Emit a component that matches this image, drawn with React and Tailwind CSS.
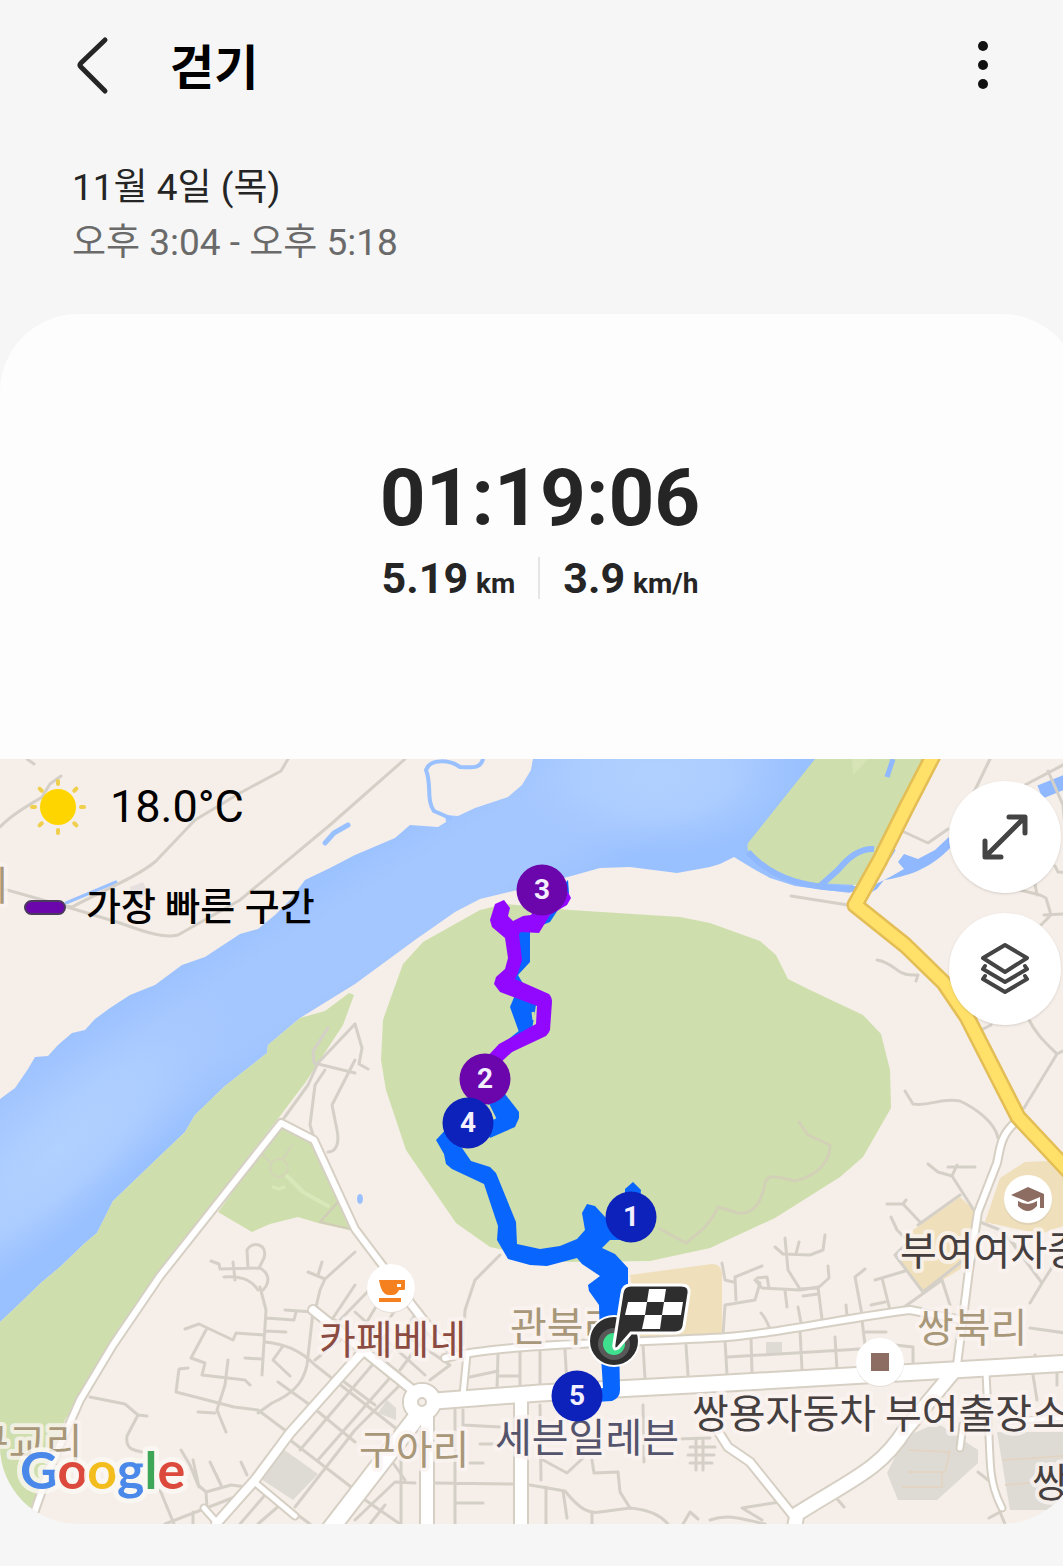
import React from 'react';

const LABEL_FONT = '"Noto Sans CJK KR", sans-serif';

const THIN_ROADS = [
    'M0 827 C14 812 30 805 42 797 L50 784 L61 776',
    'M27 759 L34 764',
    'M288 759 L281 771 L240 793 L195 820 L156 861 C140 875 105 890 72 907 L64 906 L0 888',
    'M64 906 L120 923 C150 934 165 938 178 935 L240 900 L330 825 L355 803 L405 759',
    'M791 896 L848 905',
    'M902 831 L928 843 L948 829',
    'M990 759 L975 790 L960 820',
    'M1025 785 L1080 756',
    'M1048 771 L1063 805 L1067 850 M1055 866 L1058 872 L1080 873',
    'M1020 890 L1040 895 L1046 898 L1051 915 L1040 926 M1044 915 L1080 913 M1035 884 L1037 895',
    'M877 960 C895 963 895 974 911 975 L918 975 L916 981',
    'M983 1029 L991 1025 M1028 1018 C1036 1035 1048 1045 1057 1054 L1080 1042 M1057 1054 L1024 1108',
    'M905 1091 L913 1104 C930 1107 940 1097 960 1101 C975 1108 995 1122 998 1138',
    'M355 1024 L318 1063 L308 1085 L284 1118',
    'M328 1028 L313 1051 L314 1063 L355 1073 M325 1070 L315 1085 L310 1125 L314 1138 M355 1060 L332 1105 L337 1130 C340 1145 335 1152 328 1152',
    'M355 1024 L362 1048 L359 1064 L368 1069',
    'M211 1261 L219 1264 L220 1269 L260 1268 C272 1275 268 1285 263 1290 M224 1277 C238 1276 250 1278 258 1290 M248 1268 L247 1250 C252 1240 268 1244 264 1258 L259 1268 M233 1262 L235 1280',
    'M308 1272 L325 1279 L320 1290 L316 1307 M355 1252 L325 1279 M322 1262 L318 1275',
    'M185 1329 L199 1324 L233 1340 L236 1333 L264 1335 M206 1330 L191 1358 L205 1363 L202 1375 L245 1380 L250 1385',
    'M260 1287 L266 1310 L262 1375 M266 1318 L294 1320 L296 1312 M285 1310 L313 1312 M266 1331 L286 1332 M245 1358 L262 1359',
    'M265 1342 C285 1344 300 1350 315 1365 L430 1455 M283 1346 L273 1360 L290 1376',
    'M313 1312 L307 1365 C303 1385 290 1395 272 1403 L258 1413',
    'M188 1368 L179 1369 L176 1392 L234 1407 L258 1410 L290 1434 M228 1360 L225 1385 L217 1410 L226 1432 M198 1412 L215 1413',
    'M278 1382 L310 1405 L355 1442 M90 1397 L125 1404 L138 1415 L127 1436 C125 1450 135 1450 142 1452 M138 1415 L147 1416',
    'M181 1450 L190 1465 L198 1485 L206 1492 L207 1508 M193 1460 L199 1487 M210 1462 L221 1485 M241 1462 L247 1475 M206 1492 L231 1485 L247 1487',
    'M160 1490 L174 1524 M165 1524 L240 1495 M193 1512 L193 1524',
    'M290 1440 L355 1490 M300 1450 L385 1350 M318 1460 L395 1372 M295 1507 L355 1430 L400 1385',
    'M240 1524 L265 1495 M258 1524 L280 1505 M310 1524 L295 1513 M335 1375 L375 1405 M315 1360 L340 1340',
    'M355 1285 L333 1318 M340 1320 L375 1284 M380 1300 L350 1350 M400 1303 L375 1340 M415 1315 L385 1360 M430 1330 L400 1370',
    'M405 1335 L450 1365 L430 1380 M335 1320 L405 1378 M355 1312 L425 1375',
    'M500 1255 L475 1280 L465 1310 L463 1345',
    'M498 1353 L497 1390 M520 1350 L520 1390 M540 1349 L540 1385 M565 1350 L567 1385 M470 1377 L498 1371 M498 1376 L520 1376',
    'M463 1410 L463 1425 L500 1427 M455 1410 L455 1524 M401 1440 L401 1524 M540 1405 L541 1480 M435 1483 L515 1484 M455 1503 L483 1503 M470 1463 L483 1463 M480 1444 L515 1444',
    'M355 1493 L400 1524 M355 1520 L395 1482 L415 1483 M370 1524 L385 1505 M391 1460 L405 1480',
    'M530 1485 L565 1491 C580 1510 590 1514 600 1512 L630 1508 C650 1510 660 1515 668 1524 M563 1491 L567 1518 M546 1487 L546 1524',
    'M543 1460 L567 1473 L583 1458 M592 1460 L594 1473 L618 1472 L620 1492 L630 1508 M592 1512 L592 1524',
    'M643 1405 L644 1462 M643 1440 L710 1438 M683 1524 L690 1512 L698 1519',
    'M690 1447 L715 1447 M688 1455 L714 1455 M690 1463 L712 1463 M696 1440 L696 1470 M703 1440 L703 1470',
    'M643 1345 L645 1379 M686 1345 L688 1375 M725 1340 L727 1375 M751 1338 L752 1373 M800 1330 L802 1370 M835 1337 L837 1370 M728 1357 L860 1349 M862 1320 L865 1345 M866 1332 L886 1332 M895 1345 L913 1347 L913 1362',
    'M723 1335 L725 1305 L755 1300 L760 1283 L755 1280 L762 1288 L800 1290 L818 1287 L822 1319 M798 1307 L802 1328 M846 1305 L847 1316',
    'M722 1263 L725 1280 L733 1282 M762 1266 L735 1277 L736 1300 M757 1278 L767 1277 L769 1288 M785 1238 L788 1270 L800 1289 L818 1288 L829 1278 L828 1266',
    'M775 1247 L783 1254 L810 1255 L823 1250 L825 1235 M799 1242 L796 1254 M785 1290 L787 1307 M803 1296 L818 1294',
    'M865 1269 L855 1277 L863 1320 M875 1280 L905 1271 M882 1278 L890 1310 M871 1305 L885 1302 M761 1313 C768 1320 767 1325 771 1330',
    'M928 1164 L938 1172 L952 1176 L975 1212 M948 1167 L955 1167 L975 1167 M952 1176 L957 1165',
    'M887 1204 L903 1204 L920 1222 M903 1204 L906 1200 M891 1217 L897 1230 L905 1238 M960 1195 L918 1225 M910 1240 L895 1255 L923 1292 L970 1255',
    'M900 1310 L942 1280 L950 1305 M1010 1240 L1042 1283 L1030 1303 M1042 1283 L1060 1255 M1030 1328 L1080 1335 M1035 1355 L1036 1362',
    'M1033 1375 L1037 1400 M1057 1370 L1057 1385 M980 1222 L1000 1230 L1015 1245',
    'M710 1520 C730 1513 745 1520 765 1524 M780 1502 L742 1508 L762 1520 M838 1500 L844 1507 M978 1472 L988 1480 M989 1518 L1000 1512 L1005 1524',
];

// d, casing width, fill width
const WHITE_ROADS = [
    ['M28 1530 L50 1468 L80 1400 L113 1345 L160 1276 L281 1123 L314 1140 L355 1229 L392 1278', 10, 6],
    ['M400 1290 L435 1335 L452 1350', 11, 7],
    ['M313 1310 L333 1326 L410 1388 L422 1400', 12, 8],
    ['M216 1524 L255 1480 L290 1433 L355 1360 L385 1328', 12, 8],
    ['M204 1508 L218 1524 M253 1481 L295 1516', 9, 5],
    ['M325 1536 L422 1410', 20, 16],
    ['M427 1400 V1536', 16, 12],
    ['M521 1395 V1536', 16, 12],
    ['M467 1354 L463 1395', 9, 5],
    ['M445 1358 C500 1344 600 1344 710 1338 C760 1337 850 1317 910 1310 L962 1320', 10, 6],
    ['M422 1402 L540 1393 L710 1384 L900 1373 L1090 1362', 19, 15],
    ['M1016 1122 C1000 1135 1000 1150 997 1163 L978 1212 L969 1270 L957 1365', 10, 6],
    ['M955 1370 L905 1430 C880 1470 850 1480 797 1514 L794 1530', 17, 13],
    ['M714 1425 L728 1447 L750 1462 L795 1518', 11, 7],
    ['M986 1372 L990 1458 C991 1485 997 1498 1002 1508', 9, 5],
    ['M963 1425 L960 1448', 9, 5],
    ['M1002 1422 L1080 1416', 7, 5],
];

const MAP_LABELS = [
    { text: '리', x: -28, y: 900, color: '#a89778' },
    { text: '구교리', x: -28, y: 1457, color: '#a89778' },
    { text: '카페베네', x: 319, y: 1354, color: '#8b4b41' },
    { text: '관북리', x: 510, y: 1341, color: '#a89778' },
    { text: '구아리', x: 359, y: 1464, color: '#a89778' },
    { text: '세븐일레븐', x: 495, y: 1452, color: '#54546c' },
    { text: '쌍북리', x: 917, y: 1342, color: '#a89778' },
    { text: '부여여자중', x: 900, y: 1265, color: '#45403f' },
    { text: '쌍용자동차 부여출장소', x: 692, y: 1428, color: '#45403f' },
    { text: '쌍', x: 1032, y: 1497, color: '#45403f' },
];

const KM_MARKERS = [
    { km: 3, x: 542, y: 890, color: '#6a06ab' },
    { km: 2, x: 485, y: 1079, color: '#6a06ab' },
    { km: 4, x: 468, y: 1123, color: '#0c22bb' },
    { km: 1, x: 631, y: 1217, color: '#0c22bb' },
    { km: 5, x: 577, y: 1396, color: '#0c22bb' },
];

const Terrain = () => (
    <g>
        <defs>
            <linearGradient id="river" gradientUnits="userSpaceOnUse" x1="270" y1="900" x2="350" y2="1030">
                <stop offset="0" stopColor="#9ac1ff" />
                <stop offset="0.3" stopColor="#a5c7ff" />
                <stop offset="0.7" stopColor="#a5c7ff" />
                <stop offset="1" stopColor="#9ac1ff" />
            </linearGradient>
            <radialGradient id="shallow">
                <stop offset="0" stopColor="#b1d1ff" />
                <stop offset="0.5" stopColor="#accdff" />
                <stop offset="1" stopColor="#a5c7ff" stopOpacity="0" />
            </radialGradient>
            <clipPath id="riverClip">
                <path d="M533 759 L531 770 L522 785 L508 797 L475 808 L458 816 L445 815 L446 822 L438 827 L410 825 L395 838 L355 855 L330 868 L305 880 L290 900 L275 915 L258 929 L240 934 L205 957 L182 965 L155 985 L130 995 L110 1008 L95 1019 L85 1030 L72 1033 L58 1045 L48 1056 L35 1057 L28 1069 L15 1088 L0 1099 V1322 L15 1308 L42 1282 L60 1267 L85 1243 L97 1233 L105 1217 L113 1201 L185 1132 L195 1115 L225 1086 L267 1053 L268 1045 L300 1018 L355 984 L415 940 L455 912 L480 899 L530 887 L575 875 L600 868 L630 867 L677 873 L710 867 L720 864 L734 857 L752 868 L770 878 L795 886 L850 893 L860 870 L815 759 Z" />
            </clipPath>
        </defs>

        <rect x="0" y="759" width="1080" height="765" fill="#f6eee8" />
        <g clipPath="url(#riverClip)">
            <rect x="0" y="759" width="900" height="570" fill="url(#river)" />
            <ellipse cx="655" cy="775" rx="150" ry="80" fill="url(#shallow)" />
            <ellipse cx="60" cy="1150" rx="240" ry="70" fill="url(#shallow)" transform="rotate(-42 60 1150)" />
        </g>

        {/* streams and ponds */}
        <g fill="none" stroke="#9ac1ff" strokeLinecap="round" strokeLinejoin="round">
            <path d="M483 759 C480 770 470 767 460 767 C450 760 430 758 426 770 C432 785 426 800 434 811 L450 818" strokeWidth="4" />
            <path d="M325 843 L334 833 L348 825" strokeWidth="5" />
            <path d="M66 903 L116 882" strokeWidth="3" />
        </g>
        <path d="M130 887 L143 882 L148 893 L132 902 Z" fill="#e6e0e0" />

        {/* green areas */}
        <g fill="#cedeac">
            <path d="M815 759 L748 843 Q746 850 752 856 C765 870 790 880 815 883 L858 885 L932 759 Z" />
            <path d="M505 904 L480 910 L423 942 L403 964 L390 1000 L383 1020 L381 1060 L386 1090 L406 1150 L432 1188 L456 1223 L490 1247 L560 1262 L650 1261 L710 1248 L775 1218 L840 1177 L863 1157 L891 1108 L890 1070 L881 1034 L863 1015 L810 990 L788 979 L776 955 L760 941 L710 923 L680 917 L570 910 Z" />
            <path d="M0 1322 L15 1308 L42 1282 L60 1267 L85 1243 L97 1233 L105 1217 L113 1201 L185 1132 L195 1115 L225 1086 L267 1053 L268 1045 L300 1018 L325 1011 L349 993 L354 995 L343 1025 L318 1063 L305 1083 L277 1120 L160 1270 L110 1345 L65 1420 L25 1524 H0 Z" />
            <path d="M281 1125 L313 1140 L358 1232 L318 1223 L298 1217 L270 1224 L252 1232 L218 1212 Z" />
        </g>
        <path d="M852 759 L868 759 L853 775 Z" fill="#d6e4b6" />
        <g fill="none" stroke="#8fb8ff" strokeLinejoin="round">
            <path d="M748 852 C775 882 810 888 856 889" strokeWidth="6" />
            <path d="M820 886 L838 870 C850 855 862 848 874 849" strokeWidth="6" />
            <path d="M893 759 L887 777" strokeWidth="5" />
            <path d="M1080 776 L1040 792" strokeWidth="14" />
        </g>
        <path
            d="M950 836 L935 850 L918 859 L904 854 L898 862 L904 869 L890 877 L876 884 L872 892 L877 889 L884 880 C905 877 930 870 952 846 Z"
            fill="#8fb8ff"
        />
        <path d="M894 849 L889 857" fill="none" stroke="#8fb8ff" strokeWidth="4" />

        {/* park footpaths */}
        <g fill="none" strokeLinecap="round" strokeLinejoin="round">
            <circle cx="279" cy="1168" r="9" stroke="#d3d4b8" strokeWidth="2" />
            <path d="M283 1159 L292 1145 M271 1163 L263 1155" stroke="#d3d4b8" strokeWidth="2" />
            <path d="M287 1176 L303 1192 L328 1206" stroke="#d8e8b9" strokeWidth="4" />
            <path d="M273 1187 L279 1189 L284 1187" stroke="#d8e8b9" strokeWidth="3" />
            <path d="M338 1202 L320 1222 L355 1230" stroke="#d1cbb9" strokeWidth="2" />
            <path d="M799 1122 L808 1135 L830 1145 C830 1160 820 1175 795 1181 C780 1178 768 1172 765 1183 C762 1200 755 1215 738 1213 L718 1207 C710 1225 700 1232 686 1243 L660 1229" stroke="#d3d0b8" strokeWidth="3" />
        </g>
        <ellipse cx="360" cy="1199" rx="3" ry="5" fill="#9ac1ff" />

        {/* school grounds and large buildings */}
        <g fill="#efdfbb">
            <path d="M960 1197 L974 1210 L970 1263 L923 1292 L900 1263 L913 1230 Z" />
            <path d="M1000 1178 L1025 1162 L1050 1161 L1080 1190 V1220 L1040 1234 L985 1222 Z" />
            <path d="M630 1275 L712 1264 Q722 1264 722 1276 V1333 L640 1337 Z" />
        </g>
        <g fill="#dedbd5">
            <path d="M887 1473 L905 1437 L937 1423 L978 1450 V1463 L937 1500 H898 Z" />
            <path d="M997 1432 H1080 V1510 H1010 Z" />
            <path d="M283 1449 L318 1474 L293 1500 L258 1477 Z" />
            <path d="M387 1400 L396 1408 V1420 L378 1413 Z" />
            <path d="M766 1342 H782 V1354 H766 Z" />
        </g>
        <path d="M908 1450 L950 1452 M908 1472 L945 1472 L950 1450 M902 1487 H942 V1472 M1003 1460 L1063 1456 M1005 1485 L1040 1482" fill="none" stroke="#e3d5c4" strokeWidth="2" />
    </g>
);

const Roads = () => (
    <g fill="none" strokeLinecap="round" strokeLinejoin="round">
        <g stroke="#d5d0c7" strokeWidth="3">
            {THIN_ROADS.map((d) => (
                <path key={d} d={d} />
            ))}
        </g>
        <g stroke="#d6cfc4">
            {WHITE_ROADS.map(([d, casing]) => (
                <path key={d} d={d} strokeWidth={casing} />
            ))}
            <circle cx="422" cy="1402" r="19" fill="#fff" strokeWidth="2" />
        </g>
        <g stroke="#fff">
            {WHITE_ROADS.map(([d, , width]) => (
                <path key={d} d={d} strokeWidth={width} />
            ))}
        </g>
        <circle cx="422" cy="1402" r="18" fill="#fff" />
        <circle cx="422" cy="1402" r="4" stroke="#d6cfc4" strokeWidth="2" fill="#f6eee8" />
        <path d="M936 750 L906 808 L880 860 L855 905 L905 945 L944 983 L967 1017 L1018 1117 L1090 1194" stroke="#e3bd55" strokeWidth="17" />
        <path d="M936 750 L906 808 L880 860 L855 905 L905 945 L944 983 L967 1017 L1018 1117 L1090 1194" stroke="#ffe16a" strokeWidth="12" />
    </g>
);

const Places = () => (
    <g>
        <g fill="#fff">
            <circle cx="391" cy="1289" r="24" fill="#e5dcd6" />
            <circle cx="391" cy="1288" r="24" />
            <circle cx="880" cy="1363" r="24" fill="#e5dcd6" />
            <circle cx="880" cy="1362" r="24" />
            <circle cx="1028" cy="1201" r="24" fill="#e0d2b4" />
            <circle cx="1028" cy="1199" r="24" />
        </g>
        <g fill="#f5801f">
            <path d="M379 1280 H405 V1289 Q405 1290 403 1290 H399 Q397 1295 392 1295 H388 Q381 1294 379 1280 Z" />
            <path d="M379 1298 H401 V1302 H379 Z" />
            <path d="M397 1284 H401 V1287 H397 Z" fill="#fff" />
        </g>
        <path d="M871 1353 H889 V1371 H871 Z" fill="#8d6c62" />
        <g fill="#8d6c62">
            <path d="M1028 1187 L1044 1194 V1208 H1040 V1197 L1028 1202 L1011 1195 Z" />
            <path d="M1018 1201 Q1028 1207 1037 1201 V1206 Q1028 1216 1018 1206 Z" />
        </g>
        <g fontFamily={LABEL_FONT} fontSize="40" fontWeight="400" stroke="#fbf4f2" strokeOpacity="0.8" strokeWidth="8" strokeLinejoin="round" paintOrder="stroke">
            {MAP_LABELS.map((label) => (
                <text key={label.text} x={label.x} y={label.y} fill={label.color}>
                    {label.text}
                </text>
            ))}
        </g>
        <text
            x="20"
            y="1489"
            fontFamily="Lato, sans-serif"
            fontSize="52"
            fontWeight="700"
            stroke="#fbf7f3"
            strokeOpacity="0.8"
            strokeWidth="10"
            strokeLinejoin="round"
            paintOrder="stroke"
        >
            <tspan fill="#4a88ea">G</tspan>
            <tspan fill="#dc4a3d">o</tspan>
            <tspan fill="#f3bd1d">o</tspan>
            <tspan fill="#4a88ea">g</tspan>
            <tspan fill="#3ea757">l</tspan>
            <tspan fill="#dc4a3d">e</tspan>
        </text>
    </g>
);

const Route = () => (
    <g>
        <g fill="#0866ff">
            <path d="M568 880 L569 893 L550 922 L530 930 L530 962 L518 975 L525 987 L536 1005 L532 1030 L519 1032 L510 1007 L515 995 L508 960 L520 930 Z" />
            <path d="M505 1094 L519 1112 L519 1118 L515 1127 L490 1138 L480 1120 L490 1100 Z" />
            <path d="M500 1060 L540 1033 L520 1030 L495 1050 Z" />
            <path d="M450 1125 L436 1140 L444 1154 L446 1164 L452 1169 L484 1184 L498 1226 L497 1240 L508 1259 L530 1265 L547 1266 L577 1258 L582 1264 L600 1276 L588 1285 L589 1291 L599 1305 L600 1340 L603 1388 L590 1390 L595 1402 L612 1401 Q620 1398 620 1390 L619 1340 L628 1285 V1268 L615 1254 L602 1248 L610 1240 L622 1240 L606 1218 L595 1206 L587 1204 L582 1213 L585 1230 L577 1239 L560 1246 L540 1249 L517 1244 L516 1222 L496 1173 L490 1167 L471 1161 L460 1145 Z" />
            <path d="M633 1182 L641 1190 L640 1200 H625 V1189 Z" />
        </g>
        <path d="M488 1105 L495 1119 M533 1012 L534 1020" stroke="#cedeac" strokeWidth="3" />
        <path d="M504 900 L510 908 L508 916 L513 921 L523 916 L531 915 L540 900 L568 892 L571 898 L567 905 L550 915 L539 933 L521 932 L519 934 L522 960 L518 973 L515 979 L549 994 Q552 997 552 1002 L550 1030 Q549 1033 546 1036 L512 1052 L499 1064 L486 1058 L499 1044 L536 1024 L537 1006 L500 992 L494 984 L496 977 L505 969 L508 958 L505 938 L492 927 L490 920 L495 904 Z" fill="#9208ff" />

        <circle cx="614" cy="1341" r="26" fill="#fff" />
        <circle cx="614" cy="1341" r="24" fill="#2e2e2e" />
        <circle cx="614" cy="1344" r="16" fill="#585858" />
        <circle cx="614" cy="1344" r="11" fill="#3fe08d" />

        {KM_MARKERS.map((marker) => (
            <g key={marker.km}>
                <circle cx={marker.x} cy={marker.y} r="25.5" fill={marker.color} />
                <text x={marker.x} y={marker.y + 9} textAnchor="middle" fontFamily="Roboto, sans-serif" fontSize="28" fontWeight="700" fill="#f4efff">
                    {marker.km}
                </text>
            </g>
        ))}

        {/* finish flag */}
        <path
            d="M631 1285 H681 Q690 1285 689 1293 L684 1326 Q683 1333 675 1333 H631 L618 1348 Q613 1351 614 1344 L622 1293 Q623 1285 631 1285 Z"
            fill="#2e2e2e"
            stroke="#fff"
            strokeWidth="3"
        />
        <g fill="#fff">
            <path d="M649 1289 H666 L664 1302 H647 Z" />
            <path d="M628 1302 H647 L645 1315 H625 Z" />
            <path d="M664 1302 H683 L681 1315 H662 Z" />
            <path d="M645 1315 H662 L660 1329 H642 Z" />
        </g>
    </g>
);

const SunIcon = () => (
    <svg className="h-14 w-14" viewBox="0 0 56 56" aria-hidden="true">
        <g stroke="#efcf4c" strokeWidth="4" strokeLinecap="round">
            {[0, 45, 90, 135, 180, 225, 270, 315].map((angle) => (
                <path key={angle} d="M28 2 V5" transform={`rotate(${angle} 28 28)`} />
            ))}
        </g>
        <circle cx="28" cy="28" r="18" fill="#ffd500" />
    </svg>
);

const MapButton = ({ label, children }) => (
    <button
        type="button"
        aria-label={label}
        className="flex h-28 w-28 items-center justify-center rounded-full bg-white shadow-sm"
    >
        <svg
            className="h-14 w-14"
            viewBox="0 0 56 56"
            fill="none"
            stroke="#444"
            strokeWidth="4"
            strokeLinecap="round"
            strokeLinejoin="round"
        >
            {children}
        </svg>
    </button>
);

const RouteMap = () => (
    <div className="relative">
        <svg className="block h-auto w-full" viewBox="0 759 1080 765">
            <Terrain />
            <Roads />
            <Places />
            <Route />
        </svg>

        <div className="absolute top-5 left-6 flex flex-col gap-11">
            <div className="flex items-center gap-6 pl-1.5">
                <SunIcon />
                <span className="text-[45px] leading-[56px] text-black">18.0°C</span>
            </div>
            <div className="flex items-center gap-5">
                <span className="h-[15px] w-[42px] rounded-full border-2 border-[#4a3a5c] bg-[#6a06ab]" />
                <span className="text-[38px] leading-[56px] font-medium text-black">가장 빠른 구간</span>
            </div>
        </div>

        <div className="absolute top-[22px] right-[19px] flex flex-col gap-5">
            <MapButton label="지도 확대">
                <path d="M9 47 L47 9 M32 8 H48 V24 M8 32 V48 H24" strokeWidth="5" />
            </MapButton>
            <MapButton label="지도 유형">
                <path d="M28 4 L50 17 L28 31 L6 17 Z" />
                <path d="M8 25 L6 28 L28 41 L50 28 L48 25" />
                <path d="M8 35 L6 38 L28 51 L50 38 L48 35" />
            </MapButton>
        </div>
    </div>
);

const Stat = ({ value, unit }) => (
    <div className="flex items-baseline gap-2 font-bold">
        <span className="text-[43px] leading-[42px]">{value}</span>
        <span className="text-[28px] leading-[28px]">{unit}</span>
    </div>
);

const App = () => {
    return (
        <div className="min-h-screen overflow-x-hidden bg-[#f6f6f6] pb-[42px] font-[Roboto,'Noto_Sans_CJK_KR',sans-serif] text-[#252525]">
            <header className="flex h-[132px] items-center pr-[60px] pl-[70px]">
                <button type="button" aria-label="뒤로" className="h-16 w-12">
                    <svg className="h-16 w-12" viewBox="0 0 48 64" fill="none" stroke="#252525" strokeWidth="5" strokeLinecap="round" strokeLinejoin="round">
                        <path d="M35 6 L11 29 Q9 31 11 33 L35 57" />
                    </svg>
                </button>
                <h1 className="mt-1.5 ml-[52px] text-[48px] leading-[64px] font-bold text-black">걷기</h1>
                <button type="button" aria-label="더보기" className="ml-auto flex h-16 w-10 items-center justify-center">
                    <svg className="h-14 w-4" viewBox="0 0 16 56" fill="#111">
                        <circle cx="8" cy="8" r="5" />
                        <circle cx="8" cy="27" r="5" />
                        <circle cx="8" cy="46" r="5" />
                    </svg>
                </button>
            </header>

            <section className="px-[72px] pt-7 pb-11 text-[37px] leading-[55px]">
                <p>11월 4일 (목)</p>
                <p className="text-[#6a6a6a]">오후 3:04 - 오후 5:18</p>
            </section>

            <main className="-mr-[17px] overflow-hidden rounded-[78px] bg-[#fdfdfd]">
                <section className="flex flex-col items-center pt-36 pb-40">
                    <p className="text-[80px] leading-[80px] font-bold">01:19:06</p>
                    <div className="mt-[19px] flex items-center gap-[23px]">
                        <Stat value="5.19" unit="km" />
                        <span className="h-[42px] w-0.5 bg-[#e5e5e5]" />
                        <Stat value="3.9" unit="km/h" />
                    </div>
                </section>
                <RouteMap />
            </main>
        </div>
    );
};

export default App;
